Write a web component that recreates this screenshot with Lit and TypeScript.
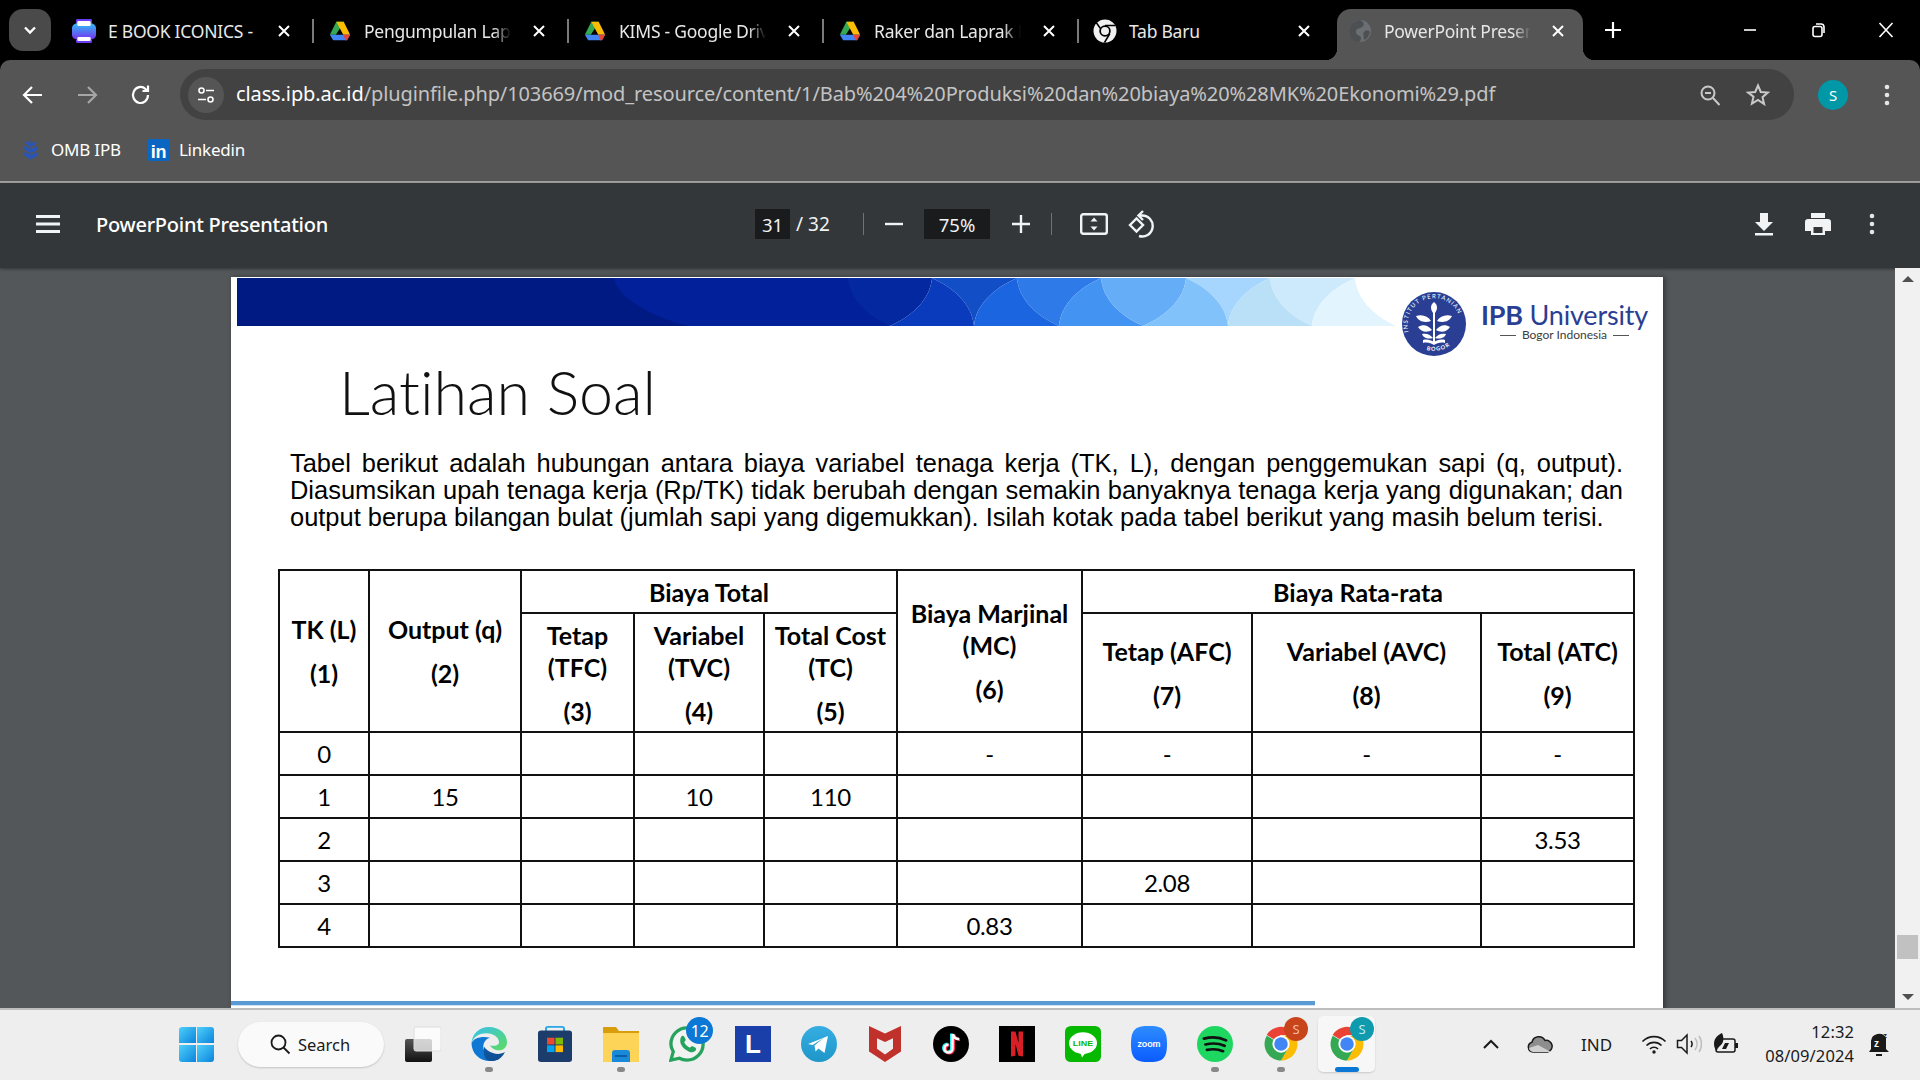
import { LitElement, html, css, svg } from "lit";
import { customElement } from "lit/decorators.js";

// --- banner geometry: leaves of the slide header, x in banner px ---
const BANNER_X0 = 237;
const bannerH = 48;
type Edge = [number, number, "v" | "h"];
const edge = (t: number, b: number, kind: "v" | "h"): number[] => {
	const d = b - t;
	return kind === "v"
		? [t, 0, t + d * 0.04, 20, t + d * 0.42, 37, b, bannerH]
		: [t, 0, t + d * 0.58, 11, b - d * 0.04, 28, b, bannerH];
};
const x = (v: number) => v - BANNER_X0;
const down = (e: Edge) => {
	const p = edge(e[0], e[1], e[2]);
	return `C${x(p[2])} ${p[3]} ${x(p[4])} ${p[5]} ${x(p[6])} ${p[7]}`;
};
const up = (e: Edge) => {
	const p = edge(e[0], e[1], e[2]);
	return `C${x(p[4])} ${p[5]} ${x(p[2])} ${p[3]} ${x(p[0])} ${p[1]}`;
};
const topCell = (l: Edge, r: Edge) => `M${x(l[0])} 0${down(l)}${up(r)}Z`;
const bottomCell = (l: Edge, r: Edge) => `M${x(l[1])} ${bannerH}${up(l)}${down(r)}Z`;

const edges: Edge[] = [
	[848, 890, "v"],
	[932, 890, "v"],
	[932, 974, "h"],
	[1017, 974, "h"],
	[1017, 1059, "v"],
	[1101, 1059, "h"],
	[1101, 1143, "v"],
	[1186, 1143, "v"],
	[1186, 1228, "h"],
	[1270, 1228, "h"],
	[1270, 1312, "v"],
	[1355, 1312, "h"],
	[1355, 1396, "v"],
];
const topColors = ["#04289f", "#124ec6", "#2d7ae8", "#66adf7", "#a6d6fd", "#cdeafc"];
const bottomColors = ["#0a3bbd", "#1b66e0", "#4393f2", "#82c2fb", "#b9e0f7", "#e2f5fe"];

const banner = svg`<svg class="banner" viewBox="0 0 1160 48" aria-hidden="true">
	<rect width="${x(848)}" height="48" fill="#001a84" />
	<path d="M${x(614)} 0C${x(618)} 20 ${x(650)} 38 ${x(688)} 48H${x(890)}L${x(848)} 0Z" fill="#02209a" />
	${topColors.map((c, i) => svg`<path d="${topCell(edges[i * 2], edges[i * 2 + 1])}" fill="${c}" />`)}
	${bottomColors.map((c, i) => svg`<path d="${bottomCell(edges[i * 2 + 1], edges[i * 2 + 2])}" fill="${c}" />`)}
</svg>`;

const ipbSeal = svg`<svg class="seal" viewBox="0 0 64 64" aria-hidden="true">
	<defs>
		<path id="sealTop" d="M6.5 40A26.5 26.5 0 1 1 57.5 40" />
		<path id="sealBottom" d="M14 52A27 27 0 0 0 50 52" />
	</defs>
	<circle cx="32" cy="32" r="32" fill="#2a3f93" />
	<text font-family="Lato, sans-serif" font-size="6" fill="#fff" letter-spacing="1.1"><textPath href="#sealTop">INSTITUT PERTANIAN</textPath></text>
	<text font-family="Lato, sans-serif" font-size="5.5" font-weight="700" fill="#fff" letter-spacing="1"><textPath href="#sealBottom" startOffset="12">BOGOR</textPath></text>
	<g fill="#fff">
		<path d="M32 10c4 3 4 8 0 12c-4-4-4-9 0-12z" />
		<path d="M14 24c6-2 12 0 15 5c-6 2-12 1-15-5zM50 24c-6-2-12 0-15 5c6 2 12 1 15-5z" />
		<path d="M16 35c5-3 10-2 14 3c-5 3-11 2-14-3zM48 35c-5-3-10-2-14 3c5 3 11 2 14-3z" />
		<path d="M20 42c4-1 8 0 11 4c-4 1-9 1-11-4zM44 42c-4-1-8 0-11 4c4 1 9 1 11-4z" />
		<rect x="31" y="20" width="2" height="30" />
		<path d="M21 48c4-1 8 0 11 2c3-2 7-3 11-2v3c-4-1-8 0-11 2c-3-2-7-3-11-2z" />
	</g>
</svg>`;

// --- favicons ---
const driveIcon = svg`<svg class="fav" viewBox="-1 -1 26 24" aria-hidden="true">
	<path d="M8 1h8l-4.2 7.2L7.5 15H1z" fill="#34a853" />
	<path d="M8 1h8l7 14h-7.5z" fill="#fbbc04" />
	<path d="M5.2 15H23l-3.4 6H4.6L1 15z" fill="#4285f4" />
	<path d="M15.5 15H23l-3.4 6h-1.6z" fill="#ea4335" />
</svg>`;
const ebookIcon = svg`<svg class="fav" viewBox="4 0 18 24" preserveAspectRatio="none" aria-hidden="true">
	<defs><linearGradient id="eb" x1="0" y1="0" x2="0" y2="1"><stop offset="0" stop-color="#2fc0f5" /><stop offset="1" stop-color="#7b2cf0" /></linearGradient></defs>
	<rect x="4" y="4" width="18" height="17" rx="5" fill="url(#eb)" />
	<path d="M8 0h10a1 1 0 0 1 1 1v3H7V1a1 1 0 0 1 1-1zM7 21h12v2a1 1 0 0 1-1 1H8a1 1 0 0 1-1-1z" fill="#6a3df0" />
	<rect x="8" y="2" width="10" height="5" rx="1" fill="#fff" />
	<rect x="8" y="18" width="10" height="4" rx="1" fill="#fff" />
</svg>`;
const chromeMono = svg`<svg class="fav" viewBox="0 0 48 48" aria-hidden="true">
	<circle cx="24" cy="24" r="23" fill="#f1f1f1" />
	<path d="M24 13h20M33.5 29.5 23 47M14.5 18.5 5 5" stroke="#000" stroke-width="3" />
	<circle cx="24" cy="24" r="11.5" fill="#000" />
	<circle cx="24" cy="24" r="8" fill="#f1f1f1" />
</svg>`;
const globeIcon = svg`<svg class="fav" viewBox="0 0 24 24" aria-hidden="true">
	<circle cx="12" cy="12" r="11" fill="#6b6f73" />
	<path d="M12 1c4 2 5 5 2 7s-6 1-6 5 5 3 5 6-1 3-2 4c-6 0-10-5-10-11S6 1 12 1z" fill="#4d5053" />
	<path d="M17 12c3-1 4 0 5 1-1 4-3 7-6 8 0-3-2-7 1-9z" fill="#4d5053" />
</svg>`;

const closeX = svg`<svg class="close" viewBox="0 0 16 16" aria-hidden="true"><path d="M3 3l10 10M13 3 3 13" /></svg>`;

// --- coloured chrome logo, shared by the two taskbar entries ---
const chromeLogo = svg`<svg viewBox="0 0 48 48" aria-hidden="true">
	<path d="M5 13A22 22 0 0 1 43 13H24L14.5 18.5Z" fill="#ea4335" transform="translate(0 -1)" />
	<path d="M43 13A22 22 0 0 1 24 46L33.5 29.5 24 13Z" fill="#fbbc04" />
	<path d="M24 46A22 22 0 0 1 5 13L14.5 18.5 33.5 29.5Z" fill="#34a853" />
	<circle cx="24" cy="24" r="11.5" fill="#fff" />
	<circle cx="24" cy="24" r="9" fill="#4285f4" />
</svg>`;

const taskIcons = {
	edge: svg`<svg viewBox="0 0 36 40" preserveAspectRatio="none" aria-hidden="true">
		<defs>
			<linearGradient id="edgeA" x1="0" y1="0" x2="1" y2="1"><stop offset="0" stop-color="#35c1f1" /><stop offset="1" stop-color="#5fdb5f" /></linearGradient>
			<linearGradient id="edgeB" x1="0" y1="0" x2="1" y2="1"><stop offset="0" stop-color="#0c59a4" /><stop offset="1" stop-color="#114a8b" /></linearGradient>
		</defs>
		<path d="M18 1C8 1 1 9 .5 19 3 11 9 8 15 8c8 0 13 5 13 10 0 3-3 4-6 4-2 0-3-1-3-1 1 3 5 6 9 6 5 0 8-4 8-9C36 8 28 1 18 1z" fill="url(#edgeA)" />
		<path d="M.5 19C.5 31 9 39 19 39c4 0 7-1 10-3-7 1-14-3-16-9-2-5 0-12 6-14-8-2-16 0-18.500 6z" fill="#0f78d4" />
		<path d="M19 39c4 0 8-1 11-4 2-2 3-4 4-6-3 2-8 3-12 1-4-1-7-4-9-7-1 9 1 15 6 16z" fill="url(#edgeB)" />
	</svg>`,
	store: svg`<svg viewBox="0 0 36 40" preserveAspectRatio="none" aria-hidden="true">
		<path d="M9 6V3a2 2 0 0 1 2-2h14a2 2 0 0 1 2 2v3" fill="none" stroke="#2aa6e6" stroke-width="2" />
		<rect x="1" y="5" width="34" height="35" rx="3" fill="#1c3c6b" />
		<rect x="10" y="13" width="7.500" height="7.500" fill="#e8492f" />
		<rect x="18.500" y="13" width="7.500" height="7.500" fill="#7fba00" />
		<rect x="10" y="21.500" width="7.500" height="7.500" fill="#01a4ef" />
		<rect x="18.500" y="21.500" width="7.500" height="7.500" fill="#ffb900" />
	</svg>`,
	folder: svg`<svg viewBox="0 0 36 36" aria-hidden="true">
		<path d="M0 2a1 1 0 0 1 1-1h12l3 4h20v4H0z" fill="#d99c0b" />
		<path d="M0 7h36v29H0z" fill="#fdd458" />
		<path d="M9 36v-9a3 3 0 0 1 3-3h12a3 3 0 0 1 3 3v9z" fill="#1a8ad8" />
		<rect x="12" y="29" width="12" height="2" fill="#0a5da6" />
	</svg>`,
	whatsapp: svg`<svg viewBox="0 0 38 38" aria-hidden="true">
		<path d="M2 36l2.500-9C2.800 24.500 2 21.700 2 19 2 9.600 9.600 2 19 2s17 7.600 17 17-7.600 17-17 17c-3 0-5.700-.7-8-2z" fill="#f2f2f2" stroke="#25a35d" stroke-width="3.500" />
		<path d="M13 11c1-1 2-1 3 0l1.500 3c.3.800 0 1.500-1.500 3 1 2.500 3 4.500 6 6 1.500-1.500 2.300-1.700 3-1.500l3 1.500c1 1 .8 2-.3 3.500-2 2-6 1.500-10-1.500-5-3.500-7.500-9-4.700-14z" fill="#25a35d" />
	</svg>`,
	telegram: svg`<svg viewBox="0 0 36 36" aria-hidden="true">
		<defs><linearGradient id="tg" x1="0" y1="0" x2="0" y2="1"><stop offset="0" stop-color="#37aee2" /><stop offset="1" stop-color="#1e96c8" /></linearGradient></defs>
		<circle cx="18" cy="18" r="18" fill="url(#tg)" />
		<path d="M7 18l20-8-3.500 17-6-4.500-3 3-1-6 9-7.500-11 7z" fill="#fff" />
	</svg>`,
	mcafee: svg`<svg viewBox="0 0 36 38" preserveAspectRatio="none" aria-hidden="true">
		<path d="M2 0l16 8 16-8v27L18 38 2 27z" fill="#c1312c" />
		<path d="M10 13l8 4 8-4v11l-8 6-8-6z" fill="#eee" />
	</svg>`,
	tiktok: svg`<svg viewBox="0 0 36 36" aria-hidden="true">
		<circle cx="18" cy="18" r="18" fill="#000" />
		<path d="M19.500 8v14.500a4 4 0 1 1-4-4" fill="none" stroke="#25f4ee" stroke-width="3" transform="translate(-1 -.5)" />
		<path d="M19.500 8v14.500a4 4 0 1 1-4-4M20 8c.5 3 3 5 6 5" fill="none" stroke="#fe2c55" stroke-width="3" transform="translate(1 .5)" />
		<path d="M19.500 8v14.500a4 4 0 1 1-4-4M20 8c.5 3 3 5 6 5" fill="none" stroke="#fff" stroke-width="2.500" />
	</svg>`,
	netflix: svg`<svg viewBox="0 0 36 40" aria-hidden="true" preserveAspectRatio="none">
		<rect width="36" height="40" fill="#000" />
		<path d="M12 6h4.500l3 13V6H24v28l-4.500-1-3-13v13L12 34z" fill="#d81f26" />
	</svg>`,
	line: svg`<svg viewBox="0 0 36 40" aria-hidden="true" preserveAspectRatio="none">
		<rect width="36" height="40" rx="6" fill="#06b800" />
		<ellipse cx="18" cy="19" rx="14" ry="12" fill="#fff" />
		<path d="M15 29h6l-4 6z" fill="#fff" />
		<text x="18" y="22.500" text-anchor="middle" font-family="Liberation Sans, sans-serif" font-size="9" font-weight="700" fill="#06b800">LINE</text>
	</svg>`,
	zoom: svg`<svg viewBox="0 0 36 40" aria-hidden="true" preserveAspectRatio="none">
		<defs><linearGradient id="zm" x1="0" y1="0" x2="0" y2="1"><stop offset="0" stop-color="#2d8cff" /><stop offset="1" stop-color="#0b5cff" /></linearGradient></defs>
		<path d="M18 0c12 0 18 2 18 20s-6 20-18 20S0 38 0 20 6 0 18 0z" fill="url(#zm)" />
		<text x="18" y="23" text-anchor="middle" font-family="Lato, sans-serif" font-size="9.500" font-weight="700" fill="#fff">zoom</text>
	</svg>`,
	spotify: svg`<svg viewBox="0 0 36 40" aria-hidden="true" preserveAspectRatio="none">
		<ellipse cx="18" cy="20" rx="18" ry="20" fill="#1ed760" />
		<path d="M7 14c7-2 15-2 22 2M8.500 20.500c6-1.500 13-1.500 19 1.500M10 26.500c5-1 11-1 16 1.500" fill="none" stroke="#111" stroke-width="3" stroke-linecap="round" />
	</svg>`,
};

type Task = { icon: unknown; dot?: boolean; badge?: string; badgeClass?: string; active?: boolean };
const tasks: Task[] = [
	{ icon: taskIcons.edge, dot: true },
	{ icon: taskIcons.store },
	{ icon: taskIcons.folder, dot: true },
	{ icon: taskIcons.whatsapp, badge: "12", badgeClass: "count" },
	{ icon: html`<span class="lapp">L</span>` },
	{ icon: taskIcons.telegram },
	{ icon: taskIcons.mcafee },
	{ icon: taskIcons.tiktok },
	{ icon: taskIcons.netflix },
	{ icon: taskIcons.line },
	{ icon: taskIcons.zoom },
	{ icon: taskIcons.spotify, dot: true },
	{ icon: chromeLogo, dot: true, badge: "S", badgeClass: "prof-red" },
	{ icon: chromeLogo, badge: "S", badgeClass: "prof-teal", active: true },
];

// titles hold only what the tab has room to show
const tabs = [
	{ fav: ebookIcon, title: "E BOOK ICONICS - ", fade: false },
	{ fav: driveIcon, title: "Pengumpulan Lapo", fade: true },
	{ fav: driveIcon, title: "KIMS - Google Driv", fade: true },
	{ fav: driveIcon, title: "Raker dan Laprak K", fade: true },
	{ fav: chromeMono, title: "Tab Baru", fade: false },
];

// body rows of the worksheet, one array per TK value
const rows: string[][] = [
	["0", "", "", "", "", "-", "-", "-", "-"],
	["1", "15", "", "10", "110", "", "", "", ""],
	["2", "", "", "", "", "", "", "", "3.53"],
	["3", "", "", "", "", "", "2.08", "", ""],
	["4", "", "", "", "", "0.83", "", "", ""],
];
const colWidths = [90, 152, 113, 130, 133, 185, 170, 229, 153];

@customElement("app-root")
export class AppRoot extends LitElement {
	static styles = css`
		:host {
			display: flex;
			flex-direction: column;
			width: 1920px;
			height: 1080px;
			overflow: hidden;
			font-family: "Noto Sans", sans-serif;
			background: #000;
		}
		svg {
			display: block;
		}

		/* tab strip */
		.strip {
			display: flex;
			align-items: flex-end;
			height: 60px;
			flex: none;
			padding-left: 9px;
			background: #000;
			color: #e8e8e8;
		}
		.tab-search {
			display: flex;
			align-items: center;
			justify-content: center;
			align-self: flex-start;
			width: 42px;
			height: 42px;
			margin: 9px 6px 0 0;
			border-radius: 14px;
			background: #4a4a4a;
		}
		.tab-search svg {
			width: 14px;
			height: 14px;
			fill: none;
			stroke: #fff;
			stroke-width: 2.4;
		}
		.tab {
			display: flex;
			align-items: center;
			width: 255px;
			height: 51px;
			flex: none;
			padding: 0 0 8px 15px;
			box-sizing: border-box;
			font-size: 17.500px;
			letter-spacing: -0.25px;
		}
		.tab.sep {
			padding-left: 16px;
			background: linear-gradient(#7a7a7a, #7a7a7a) left 10px / 2px 24px no-repeat;
		}
		.fav {
			width: 24px;
			height: 24px;
			flex: none;
		}
		.title {
			width: 147px;
			margin-left: 12px;
			overflow: hidden;
			white-space: pre;
			flex: none;
		}
		.title.fade {
			-webkit-mask-image: linear-gradient(90deg, #000 88%, transparent);
			mask-image: linear-gradient(90deg, #000 88%, transparent);
		}
		.close {
			width: 16px;
			height: 16px;
			margin-left: 21px;
			flex: none;
			fill: none;
			stroke: #fff;
			stroke-width: 2;
		}
		.tab.sep .close {
			margin-left: 20px;
		}
		.tab.active {
			position: relative;
			width: 246px;
			margin-left: 5px;
			padding-left: 11px;
			border-radius: 14px 14px 0 0;
			background: #555;
			color: #e6e6e6;
		}
		.tab.active .close {
			margin-left: 19px;
		}
		.tab.active::before,
		.tab.active::after {
			content: "";
			position: absolute;
			bottom: 0;
			width: 12px;
			height: 12px;
		}
		.tab.active::before {
			left: -12px;
			background: radial-gradient(circle at 0 0, #000 12px, #555 12.500px);
		}
		.tab.active::after {
			right: -12px;
			background: radial-gradient(circle at 100% 0, #000 12px, #555 12.500px);
		}
		.new-tab {
			width: 18px;
			height: 18px;
			margin: 0 0 21px 21px;
			fill: none;
			stroke: #fff;
			stroke-width: 2.200;
		}
		.win {
			display: flex;
			margin-left: auto;
			align-self: stretch;
		}
		.win > div {
			display: flex;
			align-items: center;
			justify-content: center;
			width: 68px;
		}
		.win svg {
			width: 16px;
			height: 16px;
			fill: none;
			stroke: #fff;
			stroke-width: 1.600;
		}

		/* browser toolbar */
		.chrome {
			flex: none;
			background: #555;
			border-radius: 10px 10px 0 0;
			color: #fff;
		}
		.nav {
			display: flex;
			align-items: center;
			height: 51px;
			padding-top: 9px;
			padding-bottom: 10px;
		}
		.nav-btn {
			display: flex;
			justify-content: center;
			width: 54px;
			flex: none;
		}
		.nav-btn svg {
			width: 24px;
			height: 24px;
			fill: none;
			stroke: #fff;
			stroke-width: 2.200;
		}
		.nav-btn.off svg {
			stroke: #a6a6a6;
		}
		.nav-arrows {
			display: flex;
			width: 180px;
			padding-left: 6px;
			box-sizing: border-box;
			flex: none;
		}
		.omnibox {
			display: flex;
			align-items: center;
			width: 1614px;
			height: 51px;
			padding-left: 8px;
			box-sizing: border-box;
			border-radius: 26px;
			background: #424242;
			flex: none;
		}
		.site {
			display: flex;
			align-items: center;
			justify-content: center;
			width: 36px;
			height: 36px;
			border-radius: 50%;
			background: #555;
			flex: none;
		}
		.site svg {
			width: 20px;
			height: 20px;
			fill: none;
			stroke: #fff;
			stroke-width: 1.600;
		}
		.url {
			margin-left: 12px;
			font-size: 20px;
			letter-spacing: -0.11px;
			white-space: nowrap;
			color: #c4c4c4;
			padding-bottom: 2px;
		}
		.url b {
			font-weight: 400;
			color: #fff;
		}
		.omni-right {
			display: flex;
			gap: 24px;
			margin-left: auto;
			padding-right: 24px;
			align-items: center;
		}
		.omni-right svg {
			width: 24px;
			height: 24px;
			fill: none;
			stroke: #c9c9c9;
			stroke-width: 2;
		}
		.avatar {
			display: flex;
			align-items: center;
			justify-content: center;
			width: 30px;
			height: 30px;
			margin-left: 24px;
			border-radius: 50%;
			background: #0097a7;
			font-size: 15px;
			flex: none;
		}
		.dots {
			width: 6px;
			height: 24px;
			fill: #e6e6e6;
			flex: none;
		}
		.avatar + .dots {
			margin-left: 36px;
		}
		.bookmarks {
			display: flex;
			align-items: center;
			height: 40px;
			padding: 0 0 11px 22px;
			font-size: 17px;
			letter-spacing: -0.2px;
		}
		.bookmarks svg {
			width: 18px;
			height: 22px;
			flex: none;
		}
		.bookmarks span {
			margin-left: 11px;
			padding-bottom: 2px;
		}
		.bookmarks .li {
			margin-left: 27px;
			width: 21px;
			height: 22px;
		}
		.bookmarks .li + span {
			margin-left: 10px;
		}
		.rule {
			height: 2px;
			background: #a3a3a3;
			flex: none;
		}

		/* pdf viewer toolbar */
		.pdfbar {
			display: flex;
			align-items: center;
			height: 82px;
			padding-bottom: 3px;
			flex: none;
			background: #33373a;
			color: #f1f3f4;
			box-shadow: 0 1px 3px rgba(0, 0, 0, 0.4);
			z-index: 1;
		}
		.pdf-left {
			display: flex;
			align-items: center;
			width: 755px;
			padding-left: 36px;
			box-sizing: border-box;
			flex: none;
		}
		.burger {
			width: 24px;
			height: 18px;
			flex: none;
			fill: #f1f3f4;
		}
		.doc {
			margin-left: 36px;
			padding-top: 1px;
			font-size: 20px;
			font-weight: 500;
			letter-spacing: -0.25px;
			color: #fff;
		}
		.pg {
			display: flex;
			align-items: center;
			justify-content: center;
			height: 30px;
			background: #191b1c;
			font-size: 18.500px;
			flex: none;
		}
		.pg.num {
			width: 35px;
		}
		.pg.zoom {
			width: 66px;
			margin-left: 20px;
		}
		.of {
			width: 67px;
			margin-left: 6px;
			font-size: 19px;
			flex: none;
		}
		.vr {
			width: 1px;
			height: 22px;
			background: #6f7376;
			flex: none;
		}
		.ctl {
			flex: none;
			fill: none;
			stroke: #f1f3f4;
			stroke-width: 2.400;
		}
		.minus {
			width: 20px;
			height: 20px;
			margin-left: 20px;
		}
		.plus {
			width: 20px;
			height: 20px;
			margin: 0 20px 0 21px;
		}
		.fit {
			width: 28px;
			height: 22px;
			margin-left: 28px;
		}
		.rotate {
			width: 28px;
			height: 28px;
			margin-left: 20px;
		}
		.pdf-right {
			display: flex;
			align-items: center;
			margin-left: auto;
			padding-right: 45px;
		}
		.pdf-right svg {
			flex: none;
		}
		.pdf-right .dl {
			width: 20px;
			height: 24px;
			fill: #f1f3f4;
		}
		.pdf-right .pr {
			width: 26px;
			height: 24px;
			margin-left: 31px;
			fill: #f1f3f4;
		}
		.pdf-right .dots {
			margin-left: 38px;
		}

		/* document area */
		.viewer {
			display: flex;
			flex: 1;
			min-height: 0;
			background: #53575a;
		}
		.scroller {
			flex: 1;
			min-width: 0;
			overflow: hidden;
			padding: 9px 0 0 231px;
		}
		.slide {
			width: 1432px;
			height: 830px;
			background: #fff;
			box-shadow: 2px 0 5px rgba(0, 0, 0, 0.4);
			color: #000;
		}
		.slide-head {
			display: flex;
			height: 80px;
			padding: 1px 0 0 6px;
			box-sizing: border-box;
		}
		.banner {
			width: 1160px;
			height: 48px;
			flex: none;
		}
		.seal {
			width: 64px;
			height: 64px;
			margin: 14px 0 0 5px;
			flex: none;
		}
		.brand {
			margin: 23px 0 0 15px;
			color: #2a3f93;
			font-family: Lato, sans-serif;
		}
		.brand-name {
			font-size: 27px;
			line-height: 27px;
			letter-spacing: -0.2px;
			white-space: nowrap;
		}
		.brand-name b {
			font-weight: 700;
		}
		.brand-sub {
			display: flex;
			align-items: center;
			justify-content: center;
			gap: 6px;
			font-size: 12px;
			line-height: 14px;
			color: #3c3c3c;
			white-space: nowrap;
		}
		.brand-sub i {
			width: 16px;
			height: 1px;
			background: #555;
		}
		.slide-title {
			height: 93px;
			margin: 0;
			padding-left: 108px;
			font: 300 61px/70px Lato, sans-serif;
			font-variant-ligatures: none;
			color: #111;
		}
		.lead {
			width: 1333px;
			margin: 0 0 38px 59px;
			font: 25.450px/27px "Liberation Sans", Arial, sans-serif;
			color: #000;
		}
		.lead div {
			text-align: justify;
			text-align-last: justify;
			white-space: nowrap;
		}
		.lead div:last-child {
			text-align-last: left;
		}
		table {
			width: 1355px;
			margin-left: 47px;
			border-collapse: collapse;
			table-layout: fixed;
			font-family: Lato, sans-serif;
			font-size: 24px;
			font-variant-ligatures: none;
			color: #000;
		}
		th,
		td {
			padding: 0;
			border: 2px solid #111;
			text-align: center;
			vertical-align: middle;
		}
		th {
			font-size: 25px;
			font-weight: 700;
			line-height: 32px;
			letter-spacing: 0;
		}
		th p {
			margin: 0;
		}
		th p + p {
			margin-top: 12px;
		}
		td,
		.h43 {
			height: 41px;
		}
		td {
			line-height: 32px;
			letter-spacing: -0.3px;
		}
		.h119 {
			height: 117px;
		}
		.slide-rule {
			width: 1084px;
			height: 4px;
			margin-top: 53px;
			background: #5b9bd5;
			box-shadow: 0 1px 0 #cfe1f3;
		}

		/* scrollbar */
		.sbar {
			display: flex;
			flex-direction: column;
			align-items: center;
			width: 25px;
			flex: none;
			background: #f1f1f1;
			z-index: 2;
		}
		.sbar i {
			width: 0;
			height: 0;
			border-left: 6px solid transparent;
			border-right: 6px solid transparent;
		}
		.sbar .a-up {
			margin-top: 8px;
			border-bottom: 6px solid #505050;
		}
		.sbar .thumb {
			width: 21px;
			height: 24px;
			margin-top: 653px;
			border: 0;
			background: #c1c1c1;
		}
		.sbar .a-down {
			margin-top: auto;
			margin-bottom: 8px;
			border-top: 6px solid #505050;
		}

		/* taskbar */
		.taskbar {
			display: flex;
			align-items: center;
			height: 72px;
			padding-bottom: 2px;
			box-sizing: border-box;
			flex: none;
			border-top: 2px solid #bdbdbd;
			background: #eee;
			color: #1a1a1a;
			z-index: 3;
		}
		.start {
			display: grid;
			grid-template-columns: 1fr 1fr;
			gap: 1.500px;
			width: 35px;
			height: 35px;
			margin: 0 24px 0 179px;
			border-radius: 3px;
			overflow: hidden;
			flex: none;
		}
		.start i {
			background: linear-gradient(135deg, #4fd0fb, #0a84dc);
		}
		.search {
			display: flex;
			align-items: center;
			width: 146px;
			height: 45px;
			padding-left: 31px;
			box-sizing: border-box;
			border-radius: 23px;
			background: #fafafa;
			box-shadow: 0 1px 2px rgba(0, 0, 0, 0.18);
			font-size: 16.500px;
			flex: none;
		}
		.search svg {
			width: 22px;
			height: 22px;
			margin-right: 7px;
			fill: none;
			stroke: #1a1a1a;
			stroke-width: 1.800;
		}
		.tview {
			width: 36px;
			height: 36px;
			margin: 0 30px 0 21px;
			flex: none;
		}
		.apps {
			display: flex;
			gap: 30px;
			flex: none;
		}
		.app {
			position: relative;
			width: 36px;
			height: 36px;
			flex: none;
		}
		.app > svg {
			width: 36px;
			height: 36px;
		}
		.app.active::before {
			content: "";
			position: absolute;
			left: -11px;
			right: -10px;
			top: -10px;
			bottom: -10px;
			border-radius: 5px;
			background: #f7f7f7;
			box-shadow: 0 1px 2px rgba(0, 0, 0, 0.15);
		}
		.app.active > svg {
			position: relative;
		}
		.lapp {
			display: flex;
			align-items: center;
			justify-content: center;
			width: 36px;
			height: 36px;
			background: #1b3fa8;
			color: #fff;
			font: 700 26px "Liberation Sans", sans-serif;
		}
		.run {
			position: absolute;
			left: 14px;
			bottom: -10px;
			width: 8px;
			height: 5px;
			border-radius: 3px;
			background: #888;
		}
		.app.active .run {
			left: 6px;
			width: 24px;
			background: #0a78d4;
		}
		.badge {
			position: absolute;
			display: flex;
			align-items: center;
			justify-content: center;
			border-radius: 50%;
			color: #fff;
		}
		.badge.count {
			left: 17px;
			top: -9px;
			width: 27px;
			height: 27px;
			background: #0a78d4;
			font-size: 16px;
			letter-spacing: -0.5px;
		}
		.badge.prof-red,
		.badge.prof-teal {
			left: 21px;
			top: -9px;
			width: 24px;
			height: 24px;
			font-size: 13px;
		}
		.badge.prof-red {
			background: #c8441a;
			color: #f6b9a6;
		}
		.badge.prof-teal {
			background: #0f9aad;
			color: #bfeaf0;
		}
		.tray {
			display: flex;
			align-items: center;
			margin-left: auto;
			flex: none;
			padding-right: 30px;
		}
		.tray svg {
			flex: none;
			fill: none;
			stroke: #1a1a1a;
			stroke-width: 1.500;
		}
		.chev {
			width: 18px;
			height: 12px;
		}
		.cloud {
			width: 26px;
			height: 18px;
			margin-left: 27px;
		}
		.lang {
			margin-left: 28px;
			font-size: 17px;
			width: 33px;
		}
		.wifi {
			width: 26px;
			height: 20px;
			margin-left: 27px;
		}
		.vol {
			width: 26px;
			height: 22px;
			margin-left: 9px;
		}
		.batt {
			width: 26px;
			height: 22px;
			margin-left: 11px;
		}
		.clock {
			width: 115px;
			text-align: right;
			font-size: 16.500px;
			line-height: 24px;
			letter-spacing: 0.1px;
			flex: none;
		}
		.bell {
			width: 22px;
			height: 26px;
			margin-left: 14px;
		}
	`;

	private renderTabs() {
		return tabs.map(
			(t, i) => html`<div class="tab ${i ? "sep" : ""}">
				${t.fav}
				<span class="title ${t.fade ? "fade" : ""}">${t.title}</span>
				${closeX}
			</div>`,
		);
	}

	private renderHeader() {
		return html`<thead>
			<tr>
				<th rowspan="2"><p>TK (L)</p><p>(1)</p></th>
				<th rowspan="2"><p>Output (q)</p><p>(2)</p></th>
				<th colspan="3" class="h43">Biaya Total</th>
				<th rowspan="2"><p>Biaya Marjinal<br />(MC)</p><p>(6)</p></th>
				<th colspan="3" class="h43">Biaya Rata-rata</th>
			</tr>
			<tr>
				<th class="h119"><p>Tetap<br />(TFC)</p><p>(3)</p></th>
				<th><p>Variabel<br />(TVC)</p><p>(4)</p></th>
				<th><p>Total Cost<br />(TC)</p><p>(5)</p></th>
				<th><p>Tetap (AFC)</p><p>(7)</p></th>
				<th><p>Variabel (AVC)</p><p>(8)</p></th>
				<th><p>Total (ATC)</p><p>(9)</p></th>
			</tr>
		</thead>`;
	}

	render() {
		return html`
			<div class="strip">
				<div class="tab-search">
					<svg viewBox="0 0 14 14" aria-hidden="true"><path d="M2 4.500l5 5 5-5" /></svg>
				</div>
				${this.renderTabs()}
				<div class="tab active">
					${globeIcon}
					<span class="title fade">PowerPoint Presen</span>
					${closeX}
				</div>
				<svg class="new-tab" viewBox="0 0 18 18" aria-hidden="true"><path d="M9 1v16M1 9h16" /></svg>
				<div class="win">
					<div><svg viewBox="0 0 16 16" aria-hidden="true"><path d="M2 8h12" /></svg></div>
					<div>
						<svg viewBox="0 0 16 16" aria-hidden="true">
							<rect x="3" y="4.500" width="9" height="10" rx="2" />
							<path d="M6 2h5a3 3 0 0 1 3 3v6" />
						</svg>
					</div>
					<div><svg viewBox="0 0 16 16" aria-hidden="true"><path d="M1.500 1l13 14M14.500 1l-13 14" /></svg></div>
				</div>
			</div>

			<div class="chrome">
				<div class="nav">
					<div class="nav-arrows">
						<div class="nav-btn"><svg viewBox="0 0 24 24" aria-hidden="true"><path d="M21 12H4M11 4l-8 8 8 8" /></svg></div>
						<div class="nav-btn off"><svg viewBox="0 0 24 24" aria-hidden="true"><path d="M3 12h17M13 4l8 8-8 8" /></svg></div>
						<div class="nav-btn"><svg viewBox="0 0 24 24" aria-hidden="true"><path d="M19 12a7.500 8 0 1 1-2.500-6L19 8M19 2.500V8h-5.500" /></svg></div>
					</div>
					<div class="omnibox">
						<div class="site">
							<svg viewBox="0 0 20 20" aria-hidden="true">
								<circle cx="5.500" cy="5.500" r="2.500" /><path d="M10 5.500h8M2 14.500h8" /><circle cx="14.500" cy="14.500" r="2.500" />
							</svg>
						</div>
						<span class="url"><b>class.ipb.ac.id</b>/pluginfile.php/103669/mod_resource/content/1/Bab%204%20Produksi%20dan%20biaya%20%28MK%20Ekonomi%29.pdf</span>
						<div class="omni-right">
							<svg viewBox="0 0 24 24" aria-hidden="true"><circle cx="10" cy="10" r="6.500" /><path d="M15 15l6.500 7M7 10h6" /></svg>
							<svg viewBox="0 0 24 24" aria-hidden="true"><path d="M12 2.500l2.800 6.500 7 .6-5.300 4.600 1.600 6.900L12 17l-6.100 3.600 1.600-6.900L2.200 9.600l7-.6z" /></svg>
						</div>
					</div>
					<div class="avatar">S</div>
					<svg class="dots" viewBox="0 0 6 24" aria-hidden="true"><circle cx="3" cy="4" r="2.300" /><circle cx="3" cy="12" r="2.300" /><circle cx="3" cy="20" r="2.300" /></svg>
				</div>
				<div class="bookmarks">
					<svg viewBox="0 0 18 22" aria-hidden="true">
						<path d="M9 1v20M9 7C6 7 4 5 4 3c3 0 5 2 5 4zM9 7c3 0 5-2 5-4-3 0-5 2-5 4zM9 13c-4 0-6-2-7-5 4 0 7 2 7 5zM9 13c4 0 6-2 7-5-4 0-7 2-7 5zM9 19c-4 0-6-2-7-5 4 0 7 2 7 5zM9 19c4 0 6-2 7-5-4 0-7 2-7 5z" fill="#2a55b8" stroke="#2a55b8" stroke-width="1" />
					</svg>
					<span>OMB IPB</span>
					<svg class="li" viewBox="0 0 21 22" aria-hidden="true">
						<rect width="21" height="22" rx="1" fill="#0a66c2" />
						<text x="10.500" y="18.500" text-anchor="middle" font-family="Liberation Sans, sans-serif" font-size="18" font-weight="700" fill="#fff">in</text>
					</svg>
					<span>Linkedin</span>
				</div>
			</div>
			<div class="rule"></div>

			<div class="pdfbar">
				<div class="pdf-left">
					<svg class="burger" viewBox="0 0 24 18" aria-hidden="true"><rect width="24" height="3" /><rect y="7.500" width="24" height="3" /><rect y="15" width="24" height="3" /></svg>
					<span class="doc">PowerPoint Presentation</span>
				</div>
				<div class="pg num">31</div>
				<span class="of">/ 32</span>
				<div class="vr"></div>
				<svg class="ctl minus" viewBox="0 0 20 20" aria-hidden="true"><path d="M1 10h18" /></svg>
				<div class="pg zoom">75%</div>
				<svg class="ctl plus" viewBox="0 0 20 20" aria-hidden="true"><path d="M10 1v18M1 10h18" /></svg>
				<div class="vr"></div>
				<svg class="ctl fit" viewBox="0 0 28 22" aria-hidden="true">
					<rect x="1.200" y="1.200" width="25.600" height="19.600" rx="2" />
					<path d="M14 4.500l3.500 4h-7zM14 17.500l3.500-4h-7z" fill="#f1f3f4" stroke="none" />
				</svg>
				<svg class="ctl rotate" viewBox="0 0 28 28" aria-hidden="true">
					<path d="M2 15l6.500-6.500L15 15l-6.500 6.500z" />
					<path d="M11 26a10.500 10.500 0 1 0 3-20.500h-3M15 1l-4.500 4.500L15 10" />
				</svg>
				<div class="pdf-right">
					<svg class="dl" viewBox="0 0 20 24" aria-hidden="true"><path d="M6 1h8v9h5l-9 9-9-9h5zM1 21h18v2.500H1z" /></svg>
					<svg class="pr" viewBox="0 0 26 24" aria-hidden="true">
						<path d="M6 1h14v5H6zM3 7h20a3 3 0 0 1 3 3v9h-6v4H6v-4H0v-9a3 3 0 0 1 3-3z" />
						<rect x="8.500" y="15" width="9" height="6" fill="#33373a" />
					</svg>
					<svg class="dots" viewBox="0 0 6 24" aria-hidden="true"><circle cx="3" cy="4" r="2.300" /><circle cx="3" cy="12" r="2.300" /><circle cx="3" cy="20" r="2.300" /></svg>
				</div>
			</div>

			<div class="viewer">
				<div class="scroller">
					<div class="slide">
						<div class="slide-head">
							${banner} ${ipbSeal}
							<div class="brand">
								<div class="brand-name"><b>IPB</b> University</div>
								<div class="brand-sub"><i></i>Bogor Indonesia<i></i></div>
							</div>
						</div>
						<h1 class="slide-title">Latihan Soal</h1>
						<div class="lead">
							<div>Tabel berikut adalah hubungan antara biaya variabel tenaga kerja (TK, L), dengan penggemukan sapi (q, output).</div>
							<div>Diasumsikan upah tenaga kerja (Rp/TK) tidak berubah dengan semakin banyaknya tenaga kerja yang digunakan; dan</div>
							<div>output berupa bilangan bulat (jumlah sapi yang digemukkan). Isilah kotak pada tabel berikut yang masih belum terisi.</div>
						</div>
						<table>
							<colgroup>${colWidths.map((w) => html`<col style="width:${w}px" />`)}</colgroup>
							${this.renderHeader()}
							<tbody>
								${rows.map((r) => html`<tr>${r.map((c) => html`<td>${c}</td>`)}</tr>`)}
							</tbody>
						</table>
						<div class="slide-rule"></div>
					</div>
				</div>
				<div class="sbar">
					<i class="a-up"></i>
					<i class="thumb"></i>
					<i class="a-down"></i>
				</div>
			</div>

			<div class="taskbar">
				<div class="start"><i></i><i></i><i></i><i></i></div>
				<div class="search">
					<svg viewBox="0 0 22 22" aria-hidden="true"><circle cx="9.500" cy="9.500" r="7" /><path d="M14.500 14.500l6 6" /></svg>
					Search
				</div>
				<svg class="tview" viewBox="0 0 36 36" aria-hidden="true">
					<defs><linearGradient id="tvb" x1="0" y1="0" x2="0" y2="1"><stop offset="0" stop-color="#555" /><stop offset="1" stop-color="#111" /></linearGradient></defs>
					<rect x="0" y="13" width="27" height="23" rx="2" fill="url(#tvb)" />
					<rect x="9" y="1" width="27" height="24" rx="2" fill="#fff" fill-opacity="0.75" stroke="#ddd" stroke-width="1" />
				</svg>
				<div class="apps">
					${tasks.map(
						(t) => html`<div class="app ${t.active ? "active" : ""}">
							${t.icon}
							${t.dot || t.active ? html`<span class="run"></span>` : ""}
							${t.badge ? html`<span class="badge ${t.badgeClass}">${t.badge}</span>` : ""}
						</div>`,
					)}
				</div>
				<div class="tray">
					<svg class="chev" viewBox="0 0 18 12" aria-hidden="true"><path d="M2 10l7-7 7 7" stroke-width="2" /></svg>
					<svg class="cloud" viewBox="0 0 26 18" aria-hidden="true">
						<path d="M6 17a5 5 0 0 1-1-9.800A7 7 0 0 1 18 5.500 5.700 5.700 0 0 1 20.500 17z" fill="#8e8e8e" />
						<path d="M2 13l9-3 13 7H6a5 5 0 0 1-4-4z" fill="#d0d0d0" stroke="none" />
					</svg>
					<span class="lang">IND</span>
					<svg class="wifi" viewBox="0 0 26 20" aria-hidden="true">
						<path d="M1.500 7.500a16 16 0 0 1 23 0M5.500 11.500a10.500 10.500 0 0 1 15 0M9 15a5.500 5.500 0 0 1 8 0" stroke-width="1.700" />
						<circle cx="13" cy="18" r="1.700" fill="#1a1a1a" stroke="none" />
					</svg>
					<svg class="vol" viewBox="0 0 26 22" aria-hidden="true">
						<path d="M1.500 7.500h4L11 2v18l-5.500-5.500h-4z" />
						<path d="M15 8a5 5 0 0 1 0 6" />
						<path d="M19 5a10 10 0 0 1 0 12M23 3a14 14 0 0 1 0 16" stroke="#bdbdbd" />
					</svg>
					<svg class="batt" viewBox="0 0 26 22" aria-hidden="true">
						<rect x="3" y="6" width="19" height="13" rx="2" />
						<rect x="22" y="10" width="3" height="5" fill="#1a1a1a" stroke="none" />
						<path d="M1 11C1 5 5 2 9 0c2 4 2 9-1 12-2 2-4 3-4 6C2 16 1 14 1 11zM9 16l3-6h4l-3 6z" fill="#1a1a1a" stroke="none" />
					</svg>
					<div class="clock">12:32<br />08/09/2024</div>
					<svg class="bell" viewBox="0 0 22 26" aria-hidden="true">
						<path d="M3 18V10a8 8 0 0 1 15-3v11l3 3H1z" fill="#1a1a1a" stroke="none" />
						<path d="M8 24h6" stroke-width="2" />
						<text x="6" y="16" font-family="Liberation Sans, sans-serif" font-size="10" font-weight="700" fill="#fff" stroke="none">z</text>
						<text x="15" y="7" font-family="Liberation Sans, sans-serif" font-size="8" font-weight="700" fill="#1a1a1a" stroke="none">z</text>
					</svg>
				</div>
			</div>
		`;
	}
}
